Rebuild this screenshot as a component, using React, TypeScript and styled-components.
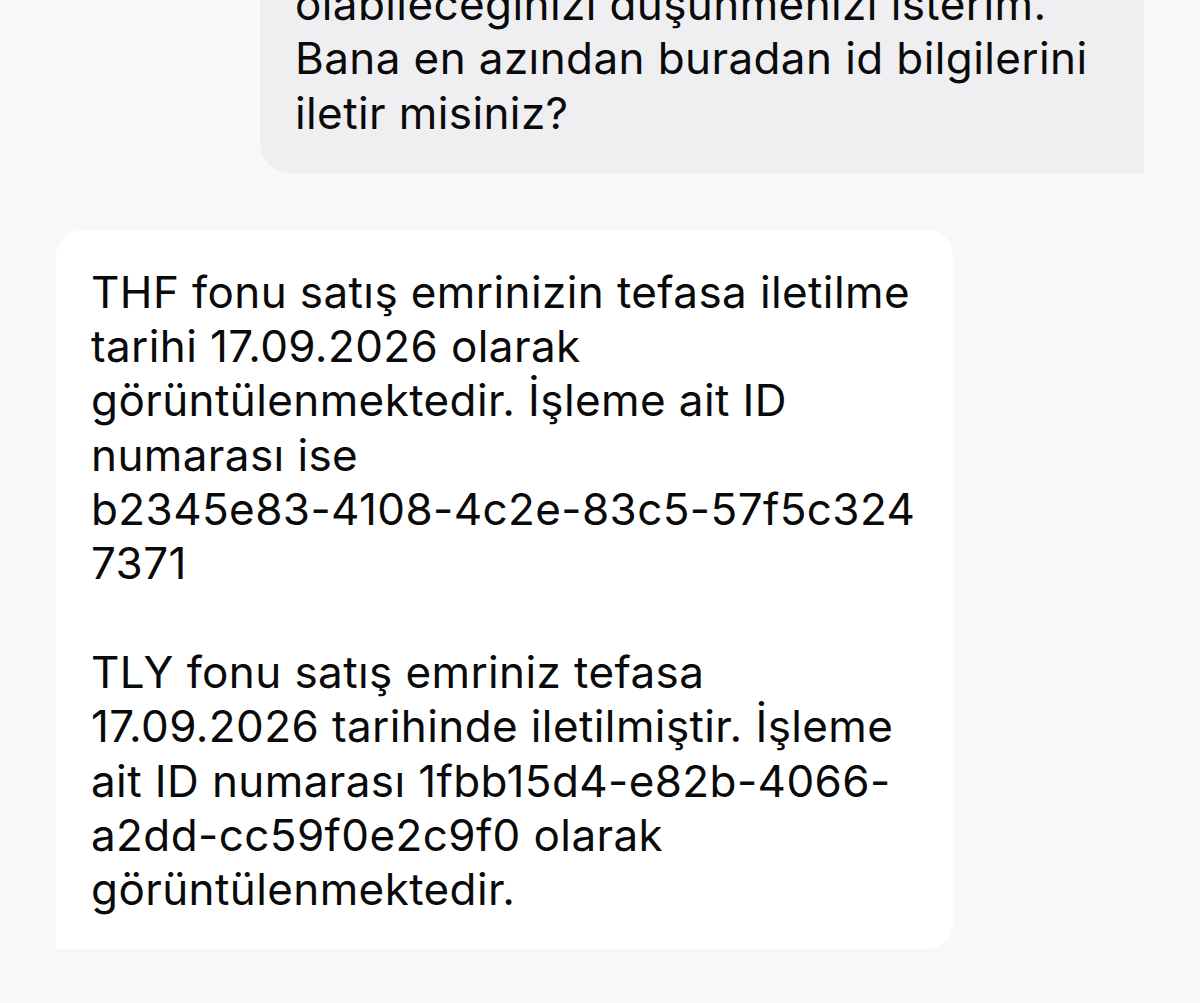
import React from 'react';
import styled, { createGlobalStyle } from 'styled-components';

const GlobalStyle = createGlobalStyle`
  html, body {
    margin: 0;
    padding: 0;
    background: #f7f8fa;
  }
  body {
    height: 1003px;
    overflow: hidden;
    font-family: Inter, "Noto Sans", "Liberation Sans", sans-serif;
    -webkit-font-smoothing: antialiased;
  }
`;

const Thread = styled.div`
  display: flex;
  flex-direction: column;
  gap: 57px;
  padding: 0 56px;
  margin-top: -58px;
`;

const Bubble = styled.div<{ outgoing?: boolean }>`
  box-sizing: border-box;
  align-self: ${({ outgoing }) => (outgoing ? 'flex-end' : 'flex-start')};
  width: ${({ outgoing }) => (outgoing ? '884px' : '897px')};
  padding: 35px 35px 33px;
  background: ${({ outgoing }) => (outgoing ? '#efeff2' : '#ffffff')};
  border-radius: ${({ outgoing }) => (outgoing ? '30px 30px 0 30px' : '26px 26px 26px 0')};
  color: #0a0a0a;
  font-size: 44px;
  line-height: 54.3px;
  letter-spacing: 0.4px;
`;

const Para = styled.p`
  margin: 0;
  & + & {
    margin-top: 54.3px;
  }
`;

const Line = styled.span`
  display: block;
  white-space: nowrap;
`;

const lines = (items: string[]) => items.map((t, i) => <Line key={i}>{t}</Line>);

export default function App() {
  return (
    <>
      <GlobalStyle />
      <Thread>
        <Bubble outgoing>
          <Para>
            {lines([
              'olabileceğinizi düşünmenizi isterim.',
              'Bana en azından buradan id bilgilerini',
              'iletir misiniz?',
            ])}
          </Para>
        </Bubble>
        <Bubble>
          <Para>
            {lines([
              'THF fonu satış emrinizin tefasa iletilme',
              'tarihi 17.09.2026 olarak',
              'görüntülenmektedir. İşleme ait ID',
              'numarası ise',
              'b2345e83-4108-4c2e-83c5-57f5c324',
              '7371',
            ])}
          </Para>
          <Para>
            {lines([
              'TLY fonu satış emriniz tefasa',
              '17.09.2026 tarihinde iletilmiştir. İşleme',
              'ait ID numarası 1fbb15d4-e82b-4066-',
              'a2dd-cc59f0e2c9f0 olarak',
              'görüntülenmektedir.',
            ])}
          </Para>
        </Bubble>
      </Thread>
    </>
  );
}
